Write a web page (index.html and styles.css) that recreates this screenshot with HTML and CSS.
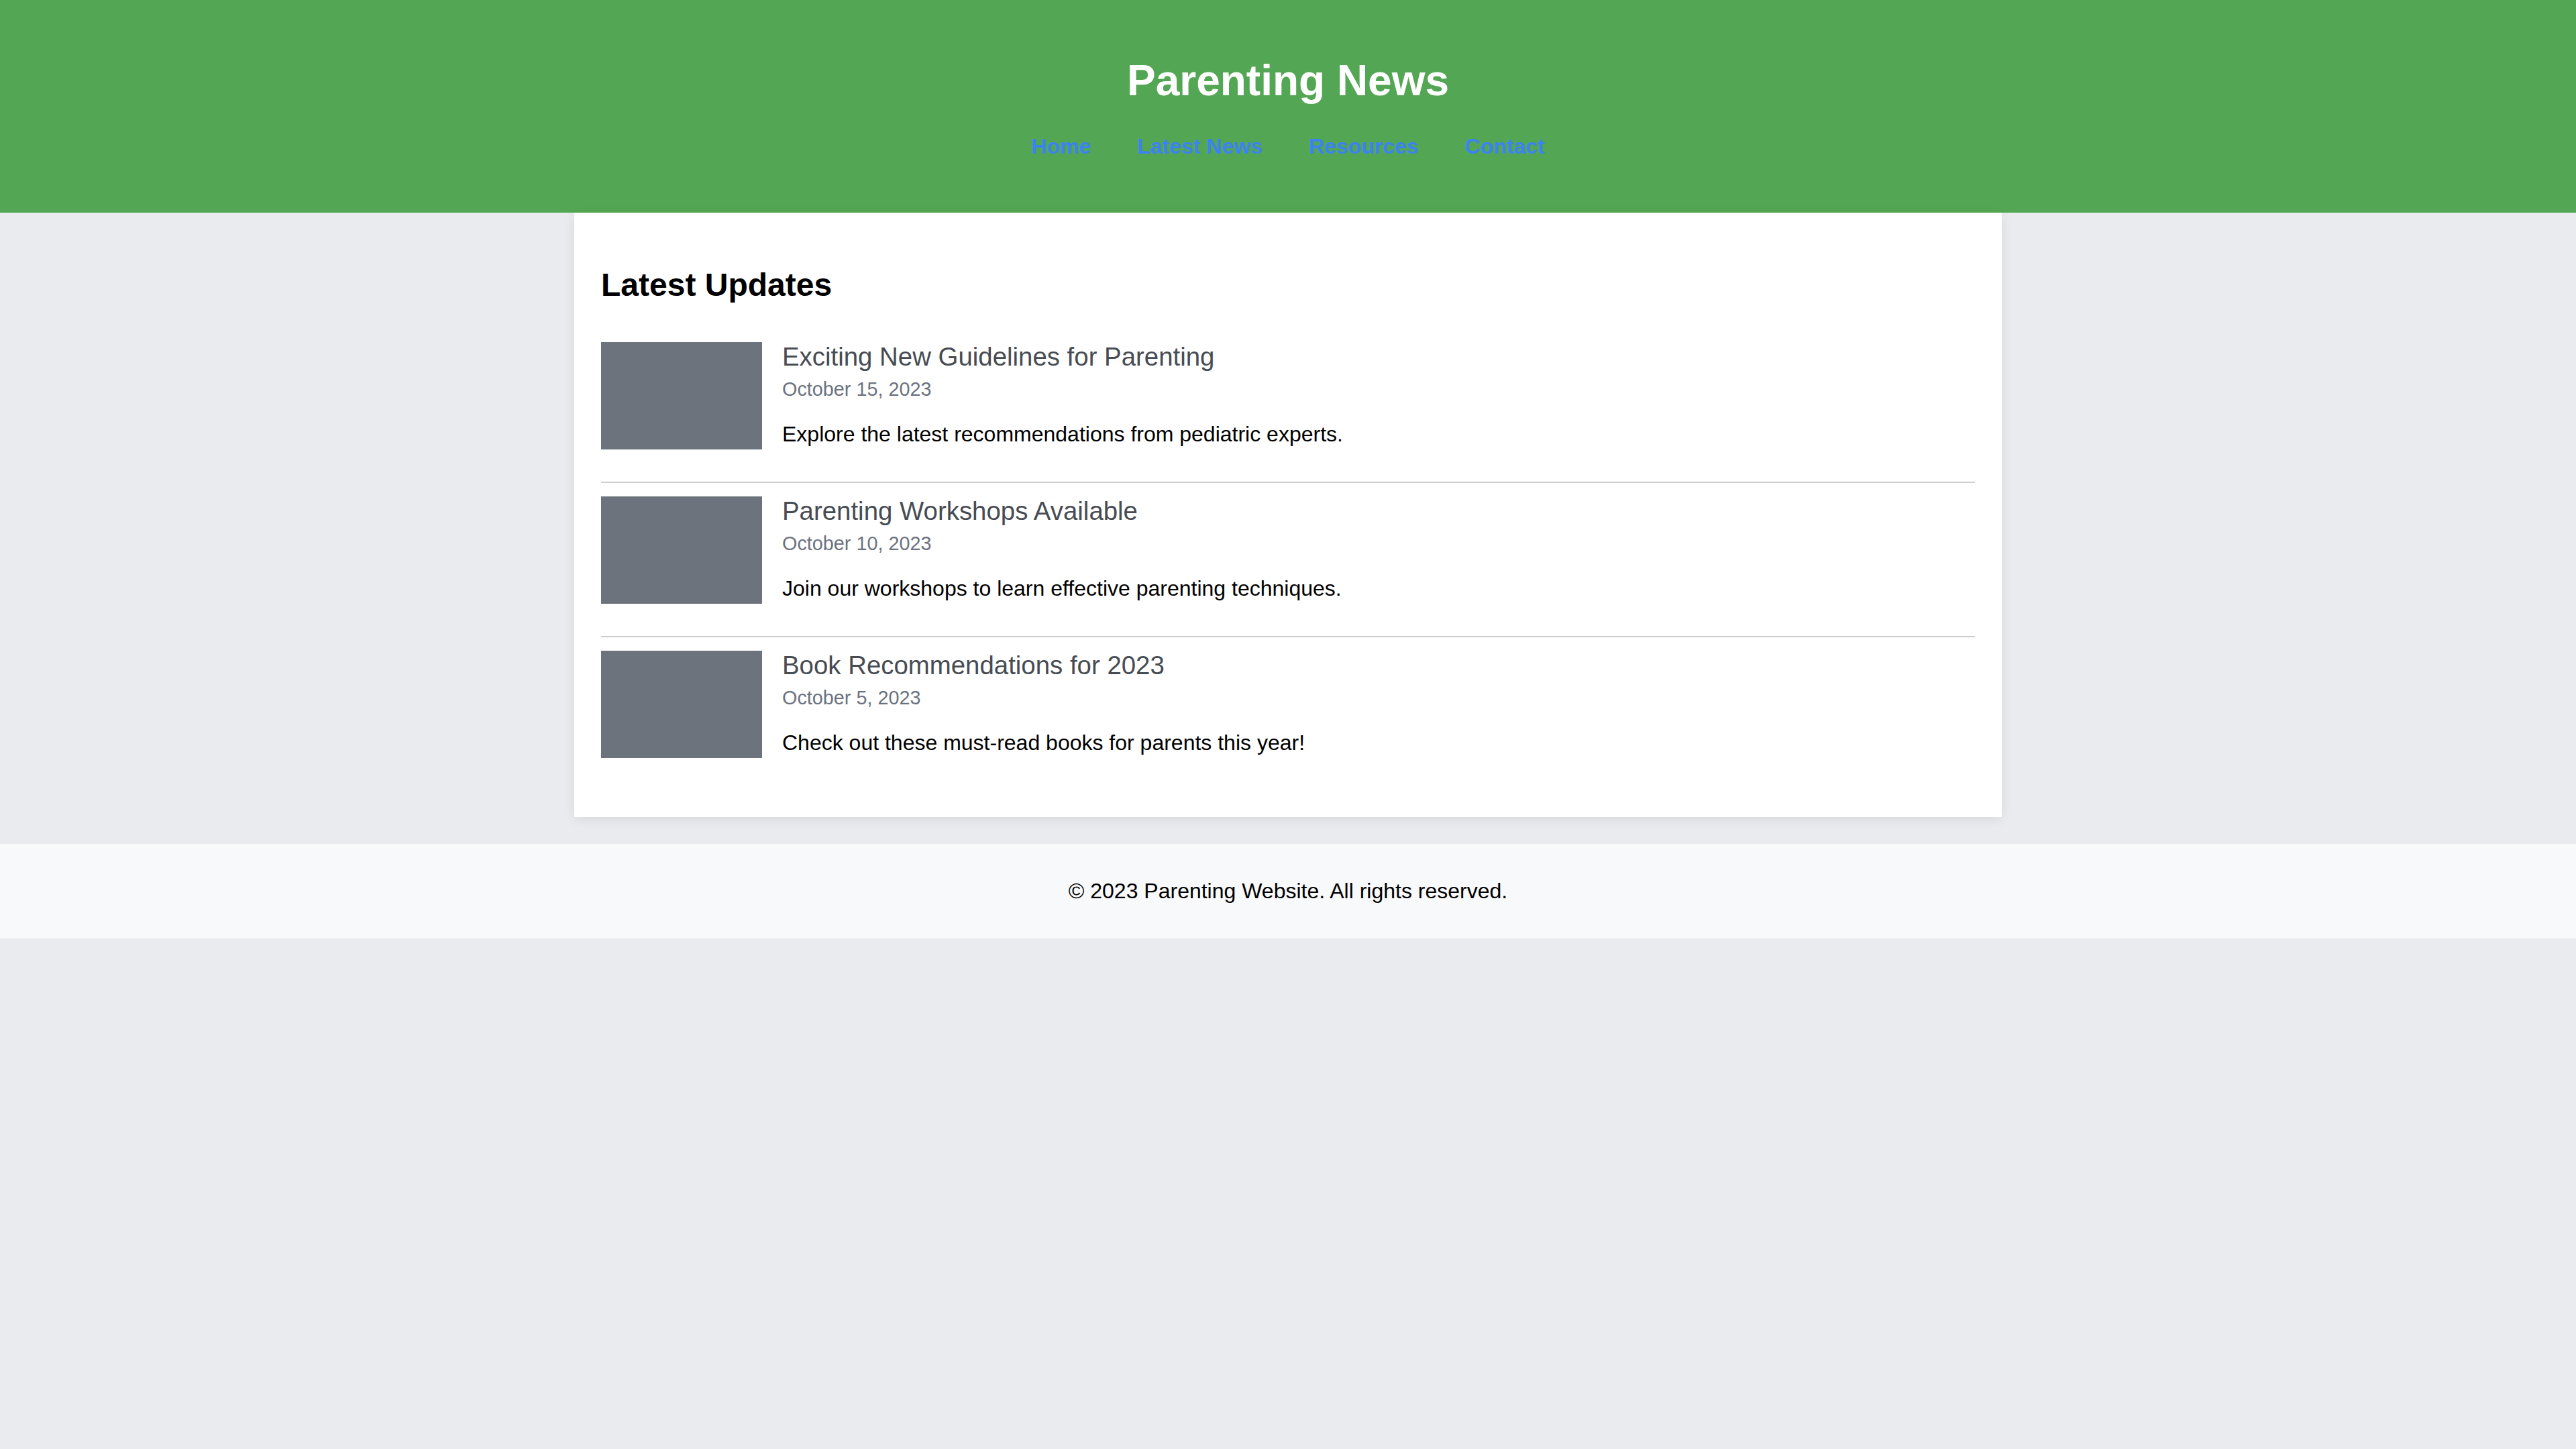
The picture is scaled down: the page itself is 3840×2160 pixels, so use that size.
FILE: index.html
```html
<!DOCTYPE html>
<html lang="en">
<head>
<meta charset="utf-8">
<title>Parenting News</title>
<link rel="stylesheet" href="styles.css">
</head>
<body>
<header class="site-header">
  <h1 class="site-title">Parenting News</h1>
  <nav class="site-nav">
    <a href="#" class="nav-link">Home</a>
    <a href="#" class="nav-link">Latest News</a>
    <a href="#" class="nav-link">Resources</a>
    <a href="#" class="nav-link">Contact</a>
  </nav>
</header>
<main class="content">
  <h2 class="section-title">Latest Updates</h2>
  <article class="news-item">
    <div class="thumb"></div>
    <div class="news-body">
      <h3 class="news-title">Exciting New Guidelines for Parenting</h3>
      <div class="news-date">October 15, 2023</div>
      <p class="news-text">Explore the latest recommendations from pediatric experts.</p>
    </div>
  </article>
  <article class="news-item">
    <div class="thumb"></div>
    <div class="news-body">
      <h3 class="news-title">Parenting Workshops Available</h3>
      <div class="news-date">October 10, 2023</div>
      <p class="news-text">Join our workshops to learn effective parenting techniques.</p>
    </div>
  </article>
  <article class="news-item">
    <div class="thumb"></div>
    <div class="news-body">
      <h3 class="news-title">Book Recommendations for 2023</h3>
      <div class="news-date">October 5, 2023</div>
      <p class="news-text">Check out these must-read books for parents this year!</p>
    </div>
  </article>
</main>
<footer class="site-footer">
  <p class="footer-text">© 2023 Parenting Website. All rights reserved.</p>
</footer>
</body>
</html>
```
FILE: styles.css
```css
html, body {
  margin: 0;
  padding: 0;
}
body {
  background: #eaebee;
  font-family: "Liberation Sans", Arial, sans-serif;
  font-size: 32px;
  color: #000;
}
.site-header {
  background: #53a653;
  padding: 40px 0;
  height: 317px;
  box-sizing: border-box;
  text-align: center;
}
.site-title {
  margin: 43px 0;
  font-size: 64px;
  font-weight: bold;
  color: #ffffff;
  line-height: normal;
}
.site-nav {
  display: flex;
  justify-content: center;
  gap: 69px;
  font-size: 32px;
  font-weight: bold;
}
.nav-link {
  color: #3b82f6;
  text-decoration: none;
}
.content {
  width: 2128px;
  box-sizing: border-box;
  margin: 0 auto 40px;
  padding: 40px;
  background: #ffffff;
  box-shadow: 0 4px 16px rgba(0, 0, 0, 0.08);
}
.section-title {
  margin: 40px 0 38px;
  font-size: 48px;
  font-weight: bold;
}
.news-item {
  display: flex;
  align-items: flex-start;
  gap: 30px;
  padding: 20px 0;
  border-bottom: 2px solid #cccccc;
}
.news-item:last-child {
  border-bottom: none;
}
.thumb {
  flex: 0 0 240px;
  width: 240px;
  height: 160px;
  background: #6c737c;
}
.news-body {
  flex: 1;
}
.news-title {
  margin: 0 0 10px;
  font-size: 38.4px;
  font-weight: normal;
  color: #474c53;
}
.news-date {
  font-size: 28.8px;
  color: #6b7280;
}
.news-text {
  margin: 32px 0;
  font-size: 32px;
}
.site-footer {
  background: #f8f9fa;
  padding: 20px 0;
  text-align: center;
}
.footer-text {
  margin: 32px 0;
  font-size: 32px;
}
```
